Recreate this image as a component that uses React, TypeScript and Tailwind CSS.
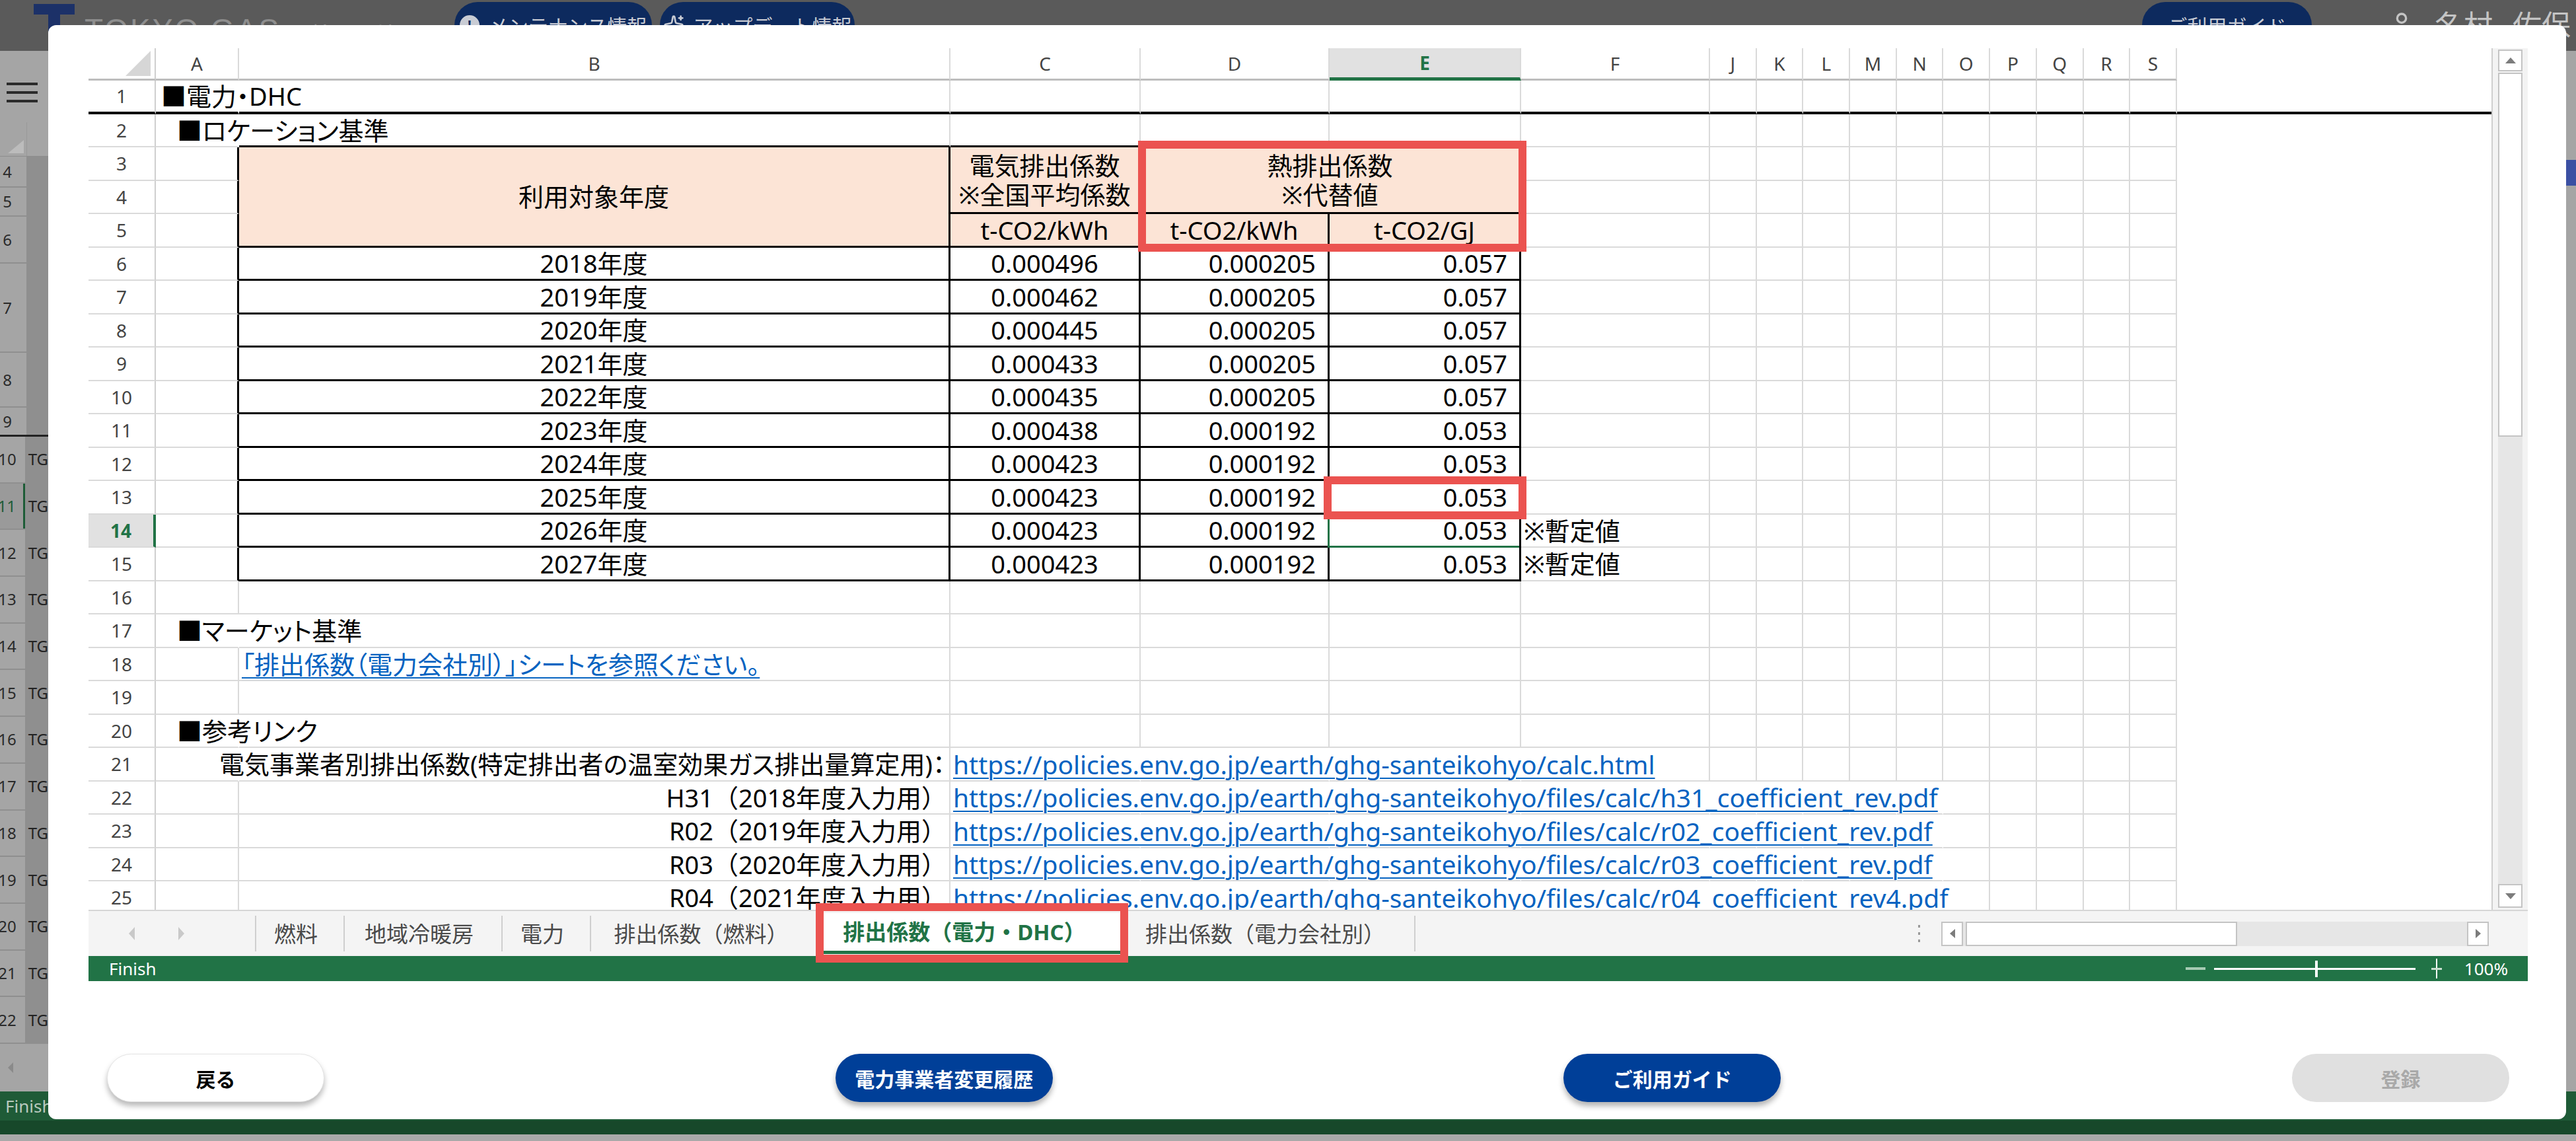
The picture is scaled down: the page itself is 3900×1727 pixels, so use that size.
import React from "react";
import clsx from "clsx";
import { Sparkles, User } from "lucide-react";

const SANS = "font-['Noto_Sans','Noto_Sans_CJK_JP',sans-serif]";
const JP = "font-['Noto_Sans_CJK_JP',sans-serif]";
const PALT = "[font-feature-settings:'palt']";

type Col = "A" | "B" | "C" | "D" | "E" | "F" | "J" | "K" | "L" | "M" | "N" | "O" | "P" | "Q" | "R" | "S";
type Line = "grid" | "black" | "none";
type Spec = { c?: React.ReactNode; r?: Line; b?: Line; cls?: string };

const COLS: { k: Col; w: string }[] = [
  { k: "A", w: "w-[126px]" },
  { k: "B", w: "w-[1077px]" },
  { k: "C", w: "w-[288px]" },
  { k: "D", w: "w-[286px]" },
  { k: "E", w: "w-[290px]" },
  { k: "F", w: "w-[286px]" },
  { k: "J", w: "w-[70.7px]" },
  { k: "K", w: "w-[70.7px]" },
  { k: "L", w: "w-[70.7px]" },
  { k: "M", w: "w-[70.7px]" },
  { k: "N", w: "w-[70.7px]" },
  { k: "O", w: "w-[70.7px]" },
  { k: "P", w: "w-[70.7px]" },
  { k: "Q", w: "w-[70.7px]" },
  { k: "R", w: "w-[70.7px]" },
  { k: "S", w: "w-[70.7px]" },
];

const RIGHT: Record<Line, string> = {
  grid: "border-r-2 border-r-[#dadada]",
  black: "border-r-[3px] border-r-black",
  none: "border-r-2 border-r-transparent",
};
const BOTTOM: Record<Line, string> = {
  grid: "border-b-2 border-b-[#dadada]",
  black: "border-b-[3px] border-b-black",
  none: "border-b-2 border-b-transparent",
};

const PEACH = "bg-[#fce4d6]";

const elec = ["0.000496", "0.000462", "0.000445", "0.000433", "0.000435", "0.000438", "0.000423", "0.000423", "0.000423", "0.000423"];
const heatK = ["0.000205", "0.000205", "0.000205", "0.000205", "0.000205", "0.000192", "0.000192", "0.000192", "0.000192", "0.000192"];
const heatG = ["0.057", "0.057", "0.057", "0.057", "0.057", "0.053", "0.053", "0.053", "0.053", "0.053"];

const BASE = "https://policies.env.go.jp/earth/ghg-santeikohyo/";
const refs = [
  { label: "H31（2018年度入力用）", url: BASE + "files/calc/h31_coefficient_rev.pdf" },
  { label: "R02（2019年度入力用）", url: BASE + "files/calc/r02_coefficient_rev.pdf" },
  { label: "R03（2020年度入力用）", url: BASE + "files/calc/r03_coefficient_rev.pdf" },
  { label: "R04（2021年度入力用）", url: BASE + "files/calc/r04_coefficient_rev4.pdf" },
];

function XLink({ children, url }: { children: React.ReactNode; url?: boolean }) {
  return (
    <span className={clsx("text-[#0563c1] underline decoration-[2px] underline-offset-[5px]", url && "text-[39px]")}>
      {children}
    </span>
  );
}

function RowHead({ n, thick }: { n: number; thick?: boolean }) {
  const active = n === 14;
  return (
    <div
      className={clsx(
        "flex h-[50.5px] w-[102px] shrink-0 items-center justify-center text-[28px] leading-none",
        SANS,
        active
          ? "border-r-[4px] border-r-[#217346] bg-[#e1e1e1] font-bold text-[#217346]"
          : "border-r-2 border-r-[#cfcfcf] text-[#444]",
        thick ? "border-b-[4px] border-b-black" : "border-b-2 border-b-[#dadada]"
      )}
    >
      {n}
    </div>
  );
}

function SheetRow({ n, cells = {}, thick }: { n: number; cells?: Partial<Record<Col, Spec>>; thick?: boolean }) {
  return (
    <div className="flex h-[50.5px] shrink-0">
      <RowHead n={n} thick={thick} />
      {COLS.map(({ k, w }) => {
        const s = cells[k] ?? {};
        return (
          <div
            key={k}
            className={clsx(
              "flex h-full shrink-0 items-center whitespace-nowrap",
              w,
              RIGHT[s.r ?? "grid"],
              thick ? "border-b-[4px] border-b-black" : BOTTOM[s.b ?? "grid"],
              s.cls
            )}
          >
            {s.c}
          </div>
        );
      })}
      <div className={clsx("flex-1", thick && "border-b-[4px] border-b-black")} />
    </div>
  );
}

function ColHeader() {
  return (
    <div className={clsx("flex h-[49px] shrink-0 text-[28px] leading-none text-[#444]", SANS)}>
      <div className="relative w-[102px] shrink-0 border-r-2 border-r-[#cfcfcf] border-b-[3px] border-b-[#bdbdbd]">
        <svg className="absolute bottom-[4px] right-[6px]" width="38" height="38" viewBox="0 0 38 38">
          <polygon points="38,0 38,38 0,38" fill="#d6d6d6" />
        </svg>
      </div>
      {COLS.map(({ k, w }) => (
        <div
          key={k}
          className={clsx(
            "flex shrink-0 items-center justify-center border-r-2 border-r-[#dadada]",
            w,
            k === "E"
              ? "border-b-[5px] border-b-[#217346] bg-[#e1e1e1] font-bold text-[#217346]"
              : "border-b-[3px] border-b-[#bdbdbd]"
          )}
        >
          {k}
        </div>
      ))}
      <div className="flex-1" />
    </div>
  );
}

function HeaderBlock() {
  const stack = (key: string, w: string, r: Line = "grid") => (
    <div key={key} className={clsx("flex shrink-0 flex-col", w)}>
      {[0, 1, 2].map((i) => (
        <div key={i} className={clsx("h-[50.5px]", RIGHT[r], BOTTOM.grid)} />
      ))}
    </div>
  );
  const head = clsx("flex items-center justify-center", PEACH, RIGHT.black, BOTTOM.black);
  return (
    <div className="flex h-[151.5px] shrink-0">
      <div className="flex w-[102px] shrink-0 flex-col">
        {[3, 4, 5].map((n) => (
          <RowHead key={n} n={n} />
        ))}
      </div>
      {stack("A", "w-[126px]", "black")}
      <div className={clsx(head, "w-[1077px] shrink-0")}>利用対象年度</div>
      <div className="flex w-[288px] shrink-0 flex-col">
        <div className={clsx(head, "h-[101px] flex-col gap-[6px]")}>
          <span>電気排出係数</span>
          <span>※全国平均係数</span>
        </div>
        <div className={clsx(head, "h-[50.5px]")}>t-CO2/kWh</div>
      </div>
      <div className="flex w-[576px] shrink-0 flex-col">
        <div className={clsx(head, "h-[101px] flex-col gap-[6px]")}>
          <span>熱排出係数</span>
          <span>※代替値</span>
        </div>
        <div className="flex h-[50.5px]">
          <div className={clsx(head, "w-[286px]")}>t-CO2/kWh</div>
          <div className={clsx(head, "w-[290px]")}>t-CO2/GJ</div>
        </div>
      </div>
      {COLS.slice(5).map(({ k, w }) => stack(k, w))}
      <div className="flex-1" />
    </div>
  );
}

function Grid() {
  const bk: Spec = { r: "black", b: "black" };
  return (
    <div className={clsx("flex min-w-0 flex-1 flex-col overflow-hidden text-[38px] leading-none text-black", SANS, PALT)}>
      <ColHeader />
      <SheetRow n={1} thick cells={{ A: { c: "■電力・DHC", r: "none", cls: "pl-[8px]" } }} />
      <SheetRow
        n={2}
        cells={{
          A: { c: "■ロケーション基準", r: "none", cls: "pl-[32px]" },
          B: { b: "black" },
          C: { b: "black" },
          D: { b: "black" },
          E: { b: "black" },
        }}
      />
      <HeaderBlock />
      {elec.map((v, i) => {
        const n = 6 + i;
        return (
          <SheetRow
            key={n}
            n={n}
            cells={{
              A: { r: "black" },
              B: { ...bk, c: `${2018 + i}年度`, cls: "justify-center" },
              C: { ...bk, c: v, cls: "justify-center" },
              D: { ...bk, c: heatK[i], cls: "justify-end pr-[18px]" },
              E: {
                ...bk,
                cls: "relative justify-end pr-[18px]",
                c: (
                  <>
                    {heatG[i]}
                    {n === 14 && (
                      <span className="absolute -left-[3px] right-0 top-0 -bottom-[3px] border-b-[3px] border-l-[3px] border-[#217346]" />
                    )}
                  </>
                ),
              },
              F: n >= 14 ? { c: "※暫定値", cls: "pl-[4px]" } : {},
            }}
          />
        );
      })}
      <SheetRow n={16} />
      <SheetRow n={17} cells={{ A: { c: "■マーケット基準", r: "none", cls: "pl-[32px]" } }} />
      <SheetRow n={18} cells={{ B: { c: <XLink>「排出係数（電力会社別）」シートを参照ください。</XLink>, cls: "pl-[4px]" } }} />
      <SheetRow n={19} />
      <SheetRow n={20} cells={{ A: { c: "■参考リンク", r: "none", cls: "pl-[32px]" } }} />
      <SheetRow
        n={21}
        cells={{
          A: { r: "none" },
          B: { c: "電気事業者別排出係数(特定排出者の温室効果ガス排出量算定用)：", cls: "justify-end pr-[6px]" },
          C: { c: <XLink url>{BASE + "calc.html"}</XLink>, r: "none", cls: "pl-[4px]" },
          D: { r: "none" },
          E: { r: "none" },
        }}
      />
      {refs.map((ref, i) => (
        <SheetRow
          key={ref.label}
          n={22 + i}
          cells={{
            B: { c: <span className="[font-feature-settings:normal]">{ref.label}</span>, cls: "justify-end pr-[4px]" },
            C: { c: <XLink url>{ref.url}</XLink>, r: "none", cls: "pl-[4px]" },
            D: { r: "none" },
            E: { r: "none" },
            F: { r: "none" },
            J: { r: "none" },
            K: { r: "none" },
            L: { r: "none" },
            M: { r: "none" },
            N: { r: "none" },
          }}
        />
      ))}
    </div>
  );
}

function Tri({ up }: { up?: boolean }) {
  return (
    <svg width="16" height="9" viewBox="0 0 16 9">
      <polygon points={up ? "0,9 16,9 8,0" : "0,0 16,0 8,9"} fill="#7c7c7c" />
    </svg>
  );
}

function VScroll() {
  return (
    <div className="flex w-[55px] shrink-0 flex-col items-center border-l-2 border-l-[#cfcfcf] bg-[#f3f3f3] pt-[2px] pb-[3px]">
      <div className="flex h-[33px] w-[37px] items-center justify-center border-2 border-[#c4c4c4] bg-white">
        <Tri up />
      </div>
      <div className="mt-[2px] h-[551px] w-[37px] border-2 border-[#c4c4c4] bg-white" />
      <div className="w-[37px] flex-1 bg-[#e6e6e6]" />
      <div className="flex h-[36px] w-[37px] items-center justify-center border-2 border-[#c4c4c4] bg-white">
        <Tri />
      </div>
    </div>
  );
}

const TABS = [
  { label: "燃料", w: "w-[134px]" },
  { label: "地域冷暖房", w: "w-[239px]" },
  { label: "電力", w: "w-[134px]" },
  { label: "排出係数（燃料）", w: "w-[347px]" },
  { label: "排出係数（電力・DHC）", w: "w-[460px]", active: true },
  { label: "排出係数（電力会社別）", w: "w-[443px]" },
];

function TabBar() {
  return (
    <div className={clsx("flex h-[70px] shrink-0 items-center border-t-2 border-t-[#d6d6d6] bg-[#f4f4f4] text-[33px] leading-none", SANS)}>
      <div className="flex w-[252px] shrink-0 items-center gap-[66px] pl-[61px]">
        <svg width="9" height="20" viewBox="0 0 9 20">
          <polygon points="9,0 9,20 0,10" fill="#c9c9c9" />
        </svg>
        <svg width="9" height="20" viewBox="0 0 9 20">
          <polygon points="0,0 0,20 9,10" fill="#c9c9c9" />
        </svg>
      </div>
      {TABS.map((t) =>
        t.active ? (
          <div
            key={t.label}
            className={clsx("flex h-[62px] shrink-0 items-center justify-center border-b-[5px] border-b-[#217346] bg-white pr-[20px] font-bold text-[#217346]", t.w)}
          >
            {t.label}
          </div>
        ) : (
          <div
            key={t.label}
            className={clsx(
              "flex h-[54px] shrink-0 items-center justify-center border-l-2 border-l-[#cfcfcf] pr-[12px] text-[#4a4a4a]",
              t.w,
              t.label === "排出係数（電力会社別）" && "border-r-2 border-r-[#cfcfcf]"
            )}
          >
            {t.label}
          </div>
        )
      )}
      <div className="flex-1" />
      <div className="mr-[32px] flex flex-col gap-[7px]">
        <span className="h-[4px] w-[3px] bg-[#9a9a9a]" />
        <span className="h-[4px] w-[3px] bg-[#9a9a9a]" />
        <span className="h-[4px] w-[3px] bg-[#9a9a9a]" />
      </div>
      <div className="flex h-[37px] w-[829px] items-stretch bg-[#e6e6e6]">
        <div className="flex w-[33px] items-center justify-center border-2 border-[#c4c4c4] bg-white">
          <svg width="8" height="14" viewBox="0 0 8 14">
            <polygon points="8,0 8,14 0,7" fill="#7c7c7c" />
          </svg>
        </div>
        <div className="ml-[4px] w-[411px] border-2 border-[#c4c4c4] bg-white" />
        <div className="flex-1" />
        <div className="flex w-[33px] items-center justify-center border-2 border-[#c4c4c4] bg-white">
          <svg width="8" height="14" viewBox="0 0 8 14">
            <polygon points="0,0 0,14 8,7" fill="#7c7c7c" />
          </svg>
        </div>
      </div>
      <div className="w-[59px] shrink-0" />
    </div>
  );
}

function StatusBar() {
  return (
    <div className={clsx("flex h-[38px] shrink-0 items-center bg-[#217346] text-[26px] leading-none text-white", SANS)}>
      <span className="pl-[31px]">Finish</span>
      <div className="ml-auto flex items-center pr-[30px]">
        <div className="h-[4px] w-[30px] bg-[#a6cbb3]" />
        <div className="relative ml-[13px] h-[3px] w-[305px] bg-white">
          <span className="absolute -top-[11px] left-[153px] h-[25px] w-[4px] bg-white" />
        </div>
        <svg className="ml-[24px]" width="16" height="30" viewBox="0 0 16 30">
          <rect x="7" y="0" width="2" height="30" fill="#fff" />
          <rect x="0" y="14" width="16" height="3" fill="#c9dfd0" />
        </svg>
        <span className="ml-[34px]">100%</span>
      </div>
    </div>
  );
}

function Btn({ label, tone }: { label: string; tone: "white" | "navy" | "off" }) {
  return (
    <button
      className={clsx(
        "flex h-[73px] w-[329px] items-center justify-center rounded-full text-[30px] font-bold leading-none",
        JP,
        tone === "white" && "border border-[#e4e4e4] bg-white text-black shadow-[0_6px_9px_rgba(0,0,0,0.28)]",
        tone === "navy" && "bg-[#003f98] text-white shadow-[0_6px_9px_rgba(0,0,0,0.3)]",
        tone === "off" && "bg-[#e0e0e0] text-[#a9a9a9]"
      )}
    >
      {label}
    </button>
  );
}

function Modal() {
  return (
    <div className="absolute left-[73px] top-[38px] flex h-[1656px] w-[3812px] flex-col rounded-[12px] bg-white pl-[61px] pr-[58px] pt-[35px]">
      <div className="flex h-[1412px] shrink-0 flex-col">
        <div className="flex h-[1304px] shrink-0">
          <Grid />
          <VScroll />
        </div>
        <TabBar />
        <StatusBar />
      </div>
      <div className="mt-[110px] flex items-center justify-between px-[28px]">
        <Btn label="戻る" tone="white" />
        <Btn label="電力事業者変更履歴" tone="navy" />
        <Btn label="ご利用ガイド" tone="navy" />
        <Btn label="登録" tone="off" />
      </div>
    </div>
  );
}

function Pill({ w, icon, label }: { w: string; icon?: React.ReactNode; label: string }) {
  return (
    <div className={clsx("mt-[3px] flex h-[70px] shrink-0 items-center justify-center gap-[14px] rounded-full bg-[#0d2a5e] text-[30px] leading-none text-[#c9ccd4]", w)}>
      {icon}
      <span>{label}</span>
    </div>
  );
}

const LEFT_ROWS = [
  { n: "4", h: "h-[47px]" },
  { n: "5", h: "h-[44px]" },
  { n: "6", h: "h-[71px]" },
  { n: "7", h: "h-[135px]" },
  { n: "8", h: "h-[83px]" },
  { n: "9", h: "h-[44px]", thick: true },
  ...Array.from({ length: 13 }, (_, i) => ({ n: String(10 + i), h: "h-[70.7px]", tg: true, thick: false })),
];

function BackPage() {
  return (
    <div className="flex h-full flex-col">
      <header className={clsx("flex h-[77px] shrink-0 items-start bg-[#5a5a5a]", JP)}>
        <div className="w-[128px] shrink-0 pl-[51px] pt-[6px]">
          <svg width="62" height="70" viewBox="0 0 62 70">
            <rect x="0" y="0" width="62" height="16" fill="#1c3168" />
            <rect x="22" y="16" width="18" height="54" fill="#1c3168" />
          </svg>
        </div>
        <div className="flex w-[560px] shrink-0 items-end pt-[22px] text-[#8e8e8e]">
          <span className="font-['Liberation_Sans',sans-serif] text-[46px] leading-none tracking-[3px]">TOKYO GAS</span>
          <span className="ml-[34px] text-[33px] leading-none">(検証環境)</span>
        </div>
        <Pill
          w="w-[299px]"
          label="メンテナンス情報"
          icon={
            <span className="flex h-[30px] w-[30px] items-center justify-center rounded-full bg-[#c9ccd4] text-[22px] font-bold text-[#0d2a5e]">!</span>
          }
        />
        <Pill w="ml-[12px] w-[295px]" label="アップデート情報" icon={<Sparkles size={32} color="#c9ccd4" />} />
        <div className="flex-1" />
        <Pill w="w-[257px]" label="ご利用ガイド" />
        <div className="flex w-[400px] shrink-0 items-center gap-[30px] pl-[116px] pt-[14px] text-[44px] leading-none text-[#c4c4c4]">
          <User size={40} color="#c4c4c4" />
          <span>名村</span>
          <span>佐保</span>
        </div>
      </header>
      <div className="flex min-h-0 flex-1">
        <div className={clsx("flex w-[73px] shrink-0 flex-col bg-[#a5a5a5]", SANS)}>
          <div className="flex h-[108px] shrink-0 flex-col gap-[9px] pl-[10px] pt-[48px]">
            <span className="h-[4px] w-[47px] bg-[#2b2b2b]" />
            <span className="h-[4px] w-[47px] bg-[#2b2b2b]" />
            <span className="h-[4px] w-[47px] bg-[#2b2b2b]" />
          </div>
          <div className="flex h-[52px] shrink-0 border-b border-b-[#8d8d8d]">
            <div className="flex w-[40px] items-end justify-end pb-[4px] pr-[4px]">
              <svg width="24" height="20" viewBox="0 0 24 20">
                <polygon points="24,0 24,20 0,20" fill="#bcbcbc" />
              </svg>
            </div>
            <div className="flex-1 border-l border-l-[#999]" />
          </div>
          {LEFT_ROWS.map((r) => (
            <div
              key={r.n}
              className={clsx(
                "flex shrink-0",
                r.h,
                r.thick ? "border-b-[3px] border-b-[#222]" : "border-b-2 border-b-[#8f8f8f]"
              )}
            >
              <div
                className={clsx(
                  "flex w-[40px] items-center overflow-hidden text-[24px] leading-none",
                  r.n === "11" ? "border-r-[3px] border-r-[#1d5c36] bg-[#9a9a9a] text-[#1d5c36]" : "text-[#2a2a2a]"
                )}
              >
                <span className="-ml-[14px] w-[50px] text-center">{r.n}</span>
              </div>
              <div className="flex flex-1 items-center bg-[#8f8f8f] pl-[5px] text-[24px] leading-none text-[#222]">
                {"tg" in r && r.tg ? "TG" : ""}
              </div>
            </div>
          ))}
          <div className="flex h-[72px] shrink-0 items-center pl-[12px]">
            <svg width="8" height="16" viewBox="0 0 8 16">
              <polygon points="8,0 8,16 0,8" fill="#8a8a8a" />
            </svg>
          </div>
          <div className="flex h-[44px] shrink-0 items-center bg-[#1f5b37] pl-[8px] text-[26px] leading-none text-[#b9c9be]">Finish</div>
          <div className="h-[21px] shrink-0 bg-[#17482a]" />
        </div>
        <div className="flex flex-1 flex-col bg-[#a3a3a3]">
          <div className="flex-1" />
          <div className="h-[44px] shrink-0 bg-[#1f5b37]" />
          <div className="h-[21px] shrink-0 bg-[#17482a]" />
        </div>
        <div className="flex w-[15px] shrink-0 flex-col bg-[#a5a5a5]">
          <div className="h-[165px] shrink-0" />
          <div className="h-[39px] shrink-0 bg-[#3b50a3]" />
          <div className="flex-1" />
          <div className="h-[44px] shrink-0 bg-[#1f5b37]" />
          <div className="h-[21px] shrink-0 bg-[#17482a]" />
        </div>
      </div>
      <div className="h-[10px] shrink-0 bg-[#a9a9a9]" />
    </div>
  );
}

function RedBox({ className }: { className: string }) {
  return <div className={clsx("pointer-events-none absolute border-[12px] border-[#eb5350]", className)} />;
}

export default function App() {
  return (
    <div className={clsx("relative h-[1727px] w-[3900px] overflow-hidden bg-[#a3a3a3]", SANS)}>
      <BackPage />
      <Modal />
      <RedBox className="left-[1723px] top-[213px] h-[168px] w-[588px]" />
      <RedBox className="left-[2004px] top-[721px] h-[65px] w-[307px]" />
      <RedBox className="left-[1235px] top-[1367px] h-[90px] w-[473px]" />
    </div>
  );
}
